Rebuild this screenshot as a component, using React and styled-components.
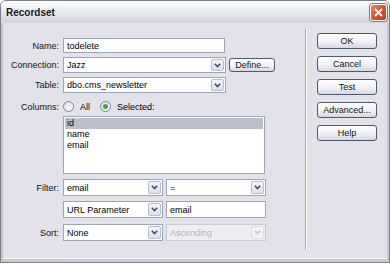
import React from 'react'
import styled, { createGlobalStyle } from 'styled-components'

const GlobalStyle = createGlobalStyle`
  html, body {
    margin: 0;
    padding: 0;
    background: #ffffff;
  }
  body {
    font-family: 'Liberation Sans', Arial, sans-serif;
    font-size: 9px;
    color: #000;
  }
  * {
    box-sizing: border-box;
  }
`

const Window = styled.div`
  width: 390px;
  height: 263px;
  border: 1px solid #7b7d8c;
  border-radius: 6px 6px 0 0;
  background: #c8c8d3;
  display: flex;
  flex-direction: column;
  overflow: hidden;
`

const TitleBar = styled.div`
  height: 22px;
  flex: none;
  display: flex;
  align-items: center;
  justify-content: space-between;
  padding: 0 2px 0 5px;
  background: linear-gradient(#ffffff, #e9ebf1 45%, #cfd2de);
`

const Title = styled.span`
  font-size: 10px;
  font-weight: bold;
  color: #1a1a22;
`

const CloseButton = styled.div`
  width: 17px;
  height: 17px;
  border: 1px solid #ffffff;
  border-radius: 3px;
  background: linear-gradient(135deg, #ec8a6c, #d9512e 50%, #c23a16);
  display: flex;
  align-items: center;
  justify-content: center;
  box-shadow: 0 0 0 1px #b86a55;
`

const Frame = styled.div`
  flex: 1;
  display: flex;
  padding: 0 2px 3px 2px;
`

const Body = styled.div`
  flex: 1;
  display: flex;
  background: #e3e2ea;
  border-bottom: 1px solid #f4f4f8;
`

const FormPane = styled.div`
  width: 302px;
  padding-top: 15px;
  display: flex;
  flex-direction: column;
`

const Row = styled.div`
  display: flex;
  align-items: ${({ $top }) => ($top ? 'flex-start' : 'center')};
  height: ${({ $h }) => $h}px;
  margin-top: ${({ $mt }) => $mt || 0}px;
`

const Label = styled.div`
  width: 60px;
  padding-right: 4px;
  text-align: right;
  flex: none;
  color: #111;
`

const Controls = styled.div`
  display: flex;
  align-items: center;
  gap: ${({ $gap }) => $gap || 3}px;
  height: 100%;
`

const TextInput = styled.div`
  width: ${({ $w }) => $w}px;
  height: 100%;
  background: #fff;
  border: 1px solid #9aa6b8;
  padding-left: 3px;
  display: flex;
  align-items: center;
`

const SelectBox = styled.div`
  width: ${({ $w }) => $w}px;
  height: 100%;
  background: ${({ $disabled }) => ($disabled ? '#eeeef0' : '#fff')};
  border: 1px solid ${({ $disabled }) => ($disabled ? '#c9ccd4' : '#9aa6b8')};
  color: ${({ $disabled }) => ($disabled ? '#b2b2ba' : '#000')};
  display: flex;
  align-items: center;
  padding: 1px;
`

const SelectText = styled.span`
  flex: 1;
  padding-left: 2px;
  white-space: nowrap;
  overflow: hidden;
`

const ArrowButton = styled.div`
  width: 13px;
  height: 100%;
  border: 1px solid ${({ $disabled }) => ($disabled ? '#dedfe5' : '#b8bdcc')};
  border-radius: 2px;
  background: ${({ $disabled }) =>
    $disabled ? '#f2f2f4' : 'linear-gradient(#f4f5fa, #dcdfea)'};
  display: flex;
  align-items: center;
  justify-content: center;
`

const PushButton = styled.div`
  width: ${({ $w }) => $w || 60}px;
  height: ${({ $h }) => $h || 16}px;
  border: 1px solid #4e5870;
  border-radius: 3px;
  background: linear-gradient(#ffffff, #f1f1f5 55%, #d6d8e2);
  display: flex;
  align-items: center;
  justify-content: center;
  color: #111;
  flex: none;
`

const RadioGroup = styled.div`
  display: flex;
  align-items: center;
  height: 100%;
`

const RadioItem = styled.div`
  display: flex;
  align-items: center;
  gap: 6px;
  margin-right: ${({ $mr }) => $mr || 0}px;
`

const RadioCircle = styled.div`
  width: 11px;
  height: 11px;
  border-radius: 50%;
  border: 1px solid #6f82a0;
  background: linear-gradient(135deg, #dcdce2, #ffffff);
  display: flex;
  align-items: center;
  justify-content: center;

  &::after {
    content: '';
    display: ${({ $checked }) => ($checked ? 'block' : 'none')};
    width: 5px;
    height: 5px;
    border-radius: 50%;
    background: #45a835;
  }
`

const ListBox = styled.div`
  width: 202px;
  height: 58px;
  background: #fff;
  border: 1px solid #9aa6b8;
  padding: 1px;
`

const ListItem = styled.div`
  height: 11px;
  line-height: 11px;
  padding-left: 2px;
  background: ${({ $selected }) => ($selected ? '#bdbdc9' : 'transparent')};
`

const Separator = styled.div`
  width: 2px;
  height: 221px;
  margin-top: 6px;
  border-left: 1px solid #a4a4ae;
  border-right: 1px solid #ffffff;
  flex: none;
`

const ButtonPane = styled.div`
  padding: 10px 0 0 10px;
  display: flex;
  flex-direction: column;
  gap: 7px;
`

const Chevron = ({ disabled }) => (
  <svg width="7" height="5" viewBox="0 0 7 5">
    <path
      d="M0.8 0.8 L3.5 3.6 L6.2 0.8"
      fill="none"
      stroke={disabled ? '#c4c6d0' : '#3d4f78'}
      strokeWidth="1.6"
    />
  </svg>
)

const Select = ({ w, value, disabled }) => (
  <SelectBox $w={w} $disabled={disabled}>
    <SelectText>{value}</SelectText>
    <ArrowButton $disabled={disabled}>
      <Chevron disabled={disabled} />
    </ArrowButton>
  </SelectBox>
)

const columns = ['id', 'name', 'email']
const sideButtons = ['OK', 'Cancel', 'Test', 'Advanced...', 'Help']

export default function App() {
  return (
    <>
      <GlobalStyle />
      <Window>
        <TitleBar>
          <Title>Recordset</Title>
          <CloseButton>
            <svg width="9" height="9" viewBox="0 0 9 9">
              <path d="M1 1 L8 8 M8 1 L1 8" stroke="#fff" strokeWidth="1.8" />
            </svg>
          </CloseButton>
        </TitleBar>
        <Frame>
          <Body>
            <FormPane>
              <Row $h={15}>
                <Label>Name:</Label>
                <Controls>
                  <TextInput $w={162}>todelete</TextInput>
                </Controls>
              </Row>
              <Row $h={16} $mt={4}>
                <Label>Connection:</Label>
                <Controls>
                  <Select w={163} value="Jazz" />
                  <PushButton $w={46} $h={14}>Define...</PushButton>
                </Controls>
              </Row>
              <Row $h={16} $mt={4}>
                <Label>Table:</Label>
                <Controls>
                  <Select w={163} value="dbo.cms_newsletter" />
                </Controls>
              </Row>
              <Row $h={13} $mt={7}>
                <Label>Columns:</Label>
                <RadioGroup>
                  <RadioItem $mr={10}>
                    <RadioCircle />
                    <span>All</span>
                  </RadioItem>
                  <RadioItem>
                    <RadioCircle $checked />
                    <span>Selected:</span>
                  </RadioItem>
                </RadioGroup>
              </Row>
              <Row $h={58} $mt={3} $top>
                <Label />
                <ListBox>
                  {columns.map((c, i) => (
                    <ListItem key={c} $selected={i === 0}>
                      {c}
                    </ListItem>
                  ))}
                </ListBox>
              </Row>
              <Row $h={17} $mt={5}>
                <Label>Filter:</Label>
                <Controls>
                  <Select w={100} value="email" />
                  <Select w={100} value="=" />
                </Controls>
              </Row>
              <Row $h={17} $mt={5}>
                <Label />
                <Controls>
                  <Select w={100} value="URL Parameter" />
                  <TextInput $w={100}>email</TextInput>
                </Controls>
              </Row>
              <Row $h={17} $mt={6}>
                <Label>Sort:</Label>
                <Controls>
                  <Select w={100} value="None" />
                  <Select w={100} value="Ascending" disabled />
                </Controls>
              </Row>
            </FormPane>
            <Separator />
            <ButtonPane>
              {sideButtons.map((b) => (
                <PushButton key={b}>{b}</PushButton>
              ))}
            </ButtonPane>
          </Body>
        </Frame>
      </Window>
    </>
  )
}
